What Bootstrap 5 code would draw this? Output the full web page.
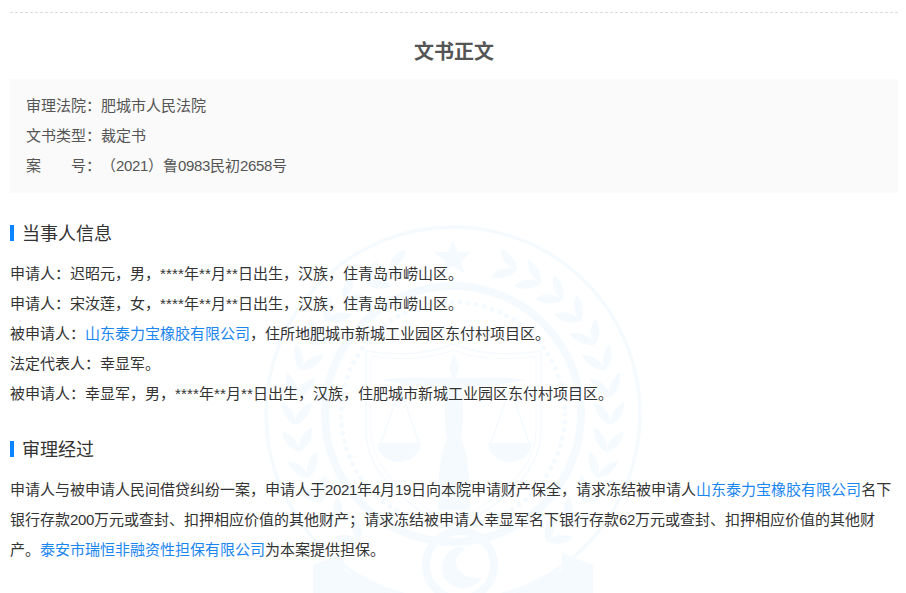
<!DOCTYPE html>
<html lang="zh-CN">
<head>
<meta charset="utf-8">
<title>文书正文</title>
<link href="https://cdn.jsdelivr.net/npm/bootstrap@5.3.0/dist/css/bootstrap.min.css" rel="stylesheet">
<style>
html,body{height:100%;overflow:hidden}
body{background:#fff;font-family:"Liberation Sans","Noto Sans CJK SC",sans-serif;font-size:15px;line-height:30px;color:#333;position:relative;text-spacing-trim:space-all}
.doc-wrap{position:relative;z-index:1;padding:12px 8px 0 10px}
.doc-rule{border-top:1px dashed #ddd;height:1px}
.doc-title{font-size:20px;font-weight:700;color:#555;line-height:28px;margin:25px 0 13px;text-align:center}
.doc-meta{background:#fafafa;padding:12px 16px;height:114px;color:#555}
.doc-section{font-size:18px;font-weight:400;line-height:24px;color:#333;margin:0;padding-left:12px;position:relative}
.doc-section::before{content:"";position:absolute;left:0;top:3px;width:4px;height:16px;background:#0a84ff}
.sec-one{margin-top:29px;margin-bottom:13px}
.sec-two{margin-top:29px;margin-bottom:13px}
.doc-body a{color:#1a86f0;text-decoration:none}
.doc-body p{margin:0}
.dg{letter-spacing:-.34px}
.st{letter-spacing:.16px}
.seal{position:absolute;left:262px;top:222px;width:384px;height:371px;z-index:0}
.seal .tint{fill:#f5faff}
.seal .line{fill:none;stroke:#f5faff}
</style>
</head>
<body>
<svg class="seal" viewBox="262 222 384 371" aria-hidden="true">
  <defs>
    <g id="pair">
      <path class="tint" d="M0 -158C-6 -168-15-171-24-170C-20-162-10-156 0-158Z"/>
      <path class="tint" d="M0 -158C-3 -149-10-142-21-140C-20-150-10-158 0-158Z"/>
    </g>
    <g id="wreath">
      <use href="#pair" transform="translate(453 414) rotate(24)"/>
      <use href="#pair" transform="translate(453 414) rotate(34)"/>
      <use href="#pair" transform="translate(453 414) rotate(44)"/>
      <use href="#pair" transform="translate(453 414) rotate(54)"/>
      <use href="#pair" transform="translate(453 414) rotate(64)"/>
      <use href="#pair" transform="translate(453 414) rotate(74)"/>
      <use href="#pair" transform="translate(453 414) rotate(84)"/>
      <use href="#pair" transform="translate(453 414) rotate(94)"/>
      <use href="#pair" transform="translate(453 414) rotate(104)"/>
      <use href="#pair" transform="translate(453 414) rotate(114)"/>
      <use href="#pair" transform="translate(453 414) rotate(124)"/>
      <use href="#pair" transform="translate(453 414) rotate(134)"/>
      <use href="#pair" transform="translate(453 414) rotate(144)"/>
    </g>
  </defs>
  <circle class="line" cx="453" cy="414" r="187" stroke-width="3.5"/>
  <circle class="line" cx="453" cy="414" r="128" stroke-width="8"/>
  <circle class="line" cx="453" cy="414" r="112" stroke-width="5" stroke-dasharray="0.1 8" stroke-linecap="round"/>
  <use href="#wreath"/>
  <use href="#wreath" transform="matrix(-1 0 0 1 906 0)"/>
  <polygon class="tint" points="453,240 458,252 472,252 461,261 465,274 453,266 441,274 445,261 434,252 448,252"/>
  <path class="line" stroke-width="1.5" d="M366 351C400 356 430 354 453 344C476 354 506 356 541 351V430C541 480 490 510 453 530C416 510 366 480 366 430Z"/>
  <path class="line" stroke-width="1" d="M371 356C402 361 430 359 453 350C476 359 504 361 536 356V430C536 476 488 504 453 524C418 504 371 476 371 430Z"/>
  <path class="tint" d="M454 355L459 367L456 378C480 378 505 376 525 380C505 385 480 387 460 387C464 400 464 420 461 440C468 450 470 480 470 510H438C438 480 440 450 447 440C444 420 444 400 448 387C428 387 402 385 382 380C402 376 428 378 452 378L449 367Z"/>
  <path class="line" stroke-width="1.5" d="M400 388L381 443M400 388L419 443M510 388L491 443M510 388L529 443"/>
  <path class="tint" d="M377 443H421C420 455 410 462 399 462S378 455 377 443ZM488 443H532C531 455 521 462 510 462S489 455 488 443Z"/>
  <circle class="line" cx="460" cy="565" r="34" stroke-width="8"/>
  <path class="tint" d="M455 548C442 554 438 570 446 580C456 592 474 590 482 578C468 580 456 572 456 562C456 556 460 552 466 550C462 546 458 546 455 548Z"/>
  <path class="tint" d="M313 565L344 553V593H313ZM344 570L392 593H344ZM593 565L562 553V593H593ZM562 570L514 593H562Z"/>
</svg>
<div class="doc-wrap">
  <div class="doc-rule"></div>
  <h1 class="doc-title">文书正文</h1>
  <div class="doc-meta">
    <div>审理法院：肥城市人民法院</div>
    <div>文书类型：裁定书</div>
    <div>案&emsp;&emsp;号：（<span class="dg">2021</span>）鲁<span class="dg">0983</span>民初<span class="dg">2658</span>号</div>
  </div>
  <h2 class="doc-section sec-one">当事人信息</h2>
  <div class="doc-body">
    <p>申请人：迟昭元，男，<span class="st">****</span>年<span class="st">**</span>月<span class="st">**</span>日出生，汉族，住青岛市崂山区。</p>
    <p>申请人：宋汝莲，女，<span class="st">****</span>年<span class="st">**</span>月<span class="st">**</span>日出生，汉族，住青岛市崂山区。</p>
    <p>被申请人：<a href="#">山东泰力宝橡胶有限公司</a>，住所地肥城市新城工业园区东付村项目区。</p>
    <p>法定代表人：幸显军。</p>
    <p>被申请人：幸显军，男，<span class="st">****</span>年<span class="st">**</span>月<span class="st">**</span>日出生，汉族，住肥城市新城工业园区东付村项目区。</p>
  </div>
  <h2 class="doc-section sec-two">审理经过</h2>
  <div class="doc-body">
    <p>申请人与被申请人民间借贷纠纷一案，申请人于<span class="dg">2021</span>年<span class="dg">4</span>月<span class="dg">19</span>日向本院申请财产保全，请求冻结被申请人<a href="#">山东泰力宝橡胶有限公司</a>名下银行存款<span class="dg">200</span>万元或查封、扣押相应价值的其他财产；请求冻结被申请人幸显军名下银行存款<span class="dg">62</span>万元或查封、扣押相应价值的其他财产。<a href="#">泰安市瑞恒非融资性担保有限公司</a>为本案提供担保。</p>
  </div>
</div>
<script src="https://cdn.jsdelivr.net/npm/bootstrap@5.3.0/dist/js/bootstrap.bundle.min.js"></script>
</body>
</html>
